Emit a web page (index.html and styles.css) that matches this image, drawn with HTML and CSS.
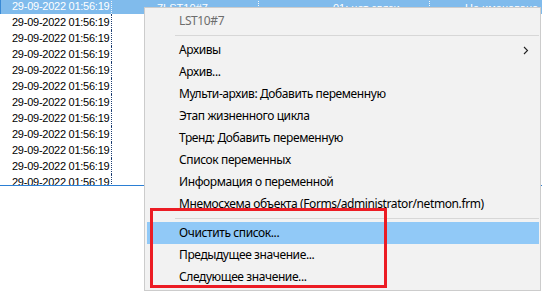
FILE: index.html
```
<!DOCTYPE html>
<html>
<head>
<meta charset="utf-8">
<link rel="stylesheet" href="styles.css">
</head>
<body>
<div class="grid">
  <div class="rows">
    <div class="row sel">
      <div class="c c1">29-09-2022 01:56:19</div>
      <div class="c c2">7LST10#7</div>
      <div class="c c3">01: нет связи</div>
      <div class="c c4">Не именовано</div>
    </div>
    <div class="row"><div class="c c1">29-09-2022 01:56:19</div></div>
    <div class="row"><div class="c c1">29-09-2022 01:56:19</div></div>
    <div class="row"><div class="c c1">29-09-2022 01:56:19</div></div>
    <div class="row"><div class="c c1">29-09-2022 01:56:19</div></div>
    <div class="row"><div class="c c1">29-09-2022 01:56:19</div></div>
    <div class="row"><div class="c c1">29-09-2022 01:56:19</div></div>
    <div class="row"><div class="c c1">29-09-2022 01:56:19</div></div>
    <div class="row"><div class="c c1">29-09-2022 01:56:19</div></div>
    <div class="row"><div class="c c1">29-09-2022 01:56:19</div></div>
    <div class="row"><div class="c c1">29-09-2022 01:56:19</div></div>
    <div class="row"><div class="c c1">29-09-2022 01:56:19</div></div>
  </div>
</div>

<div class="menu">
  <div class="mi head">LST10#7</div>
  <div class="sep"></div>
  <div class="mi">Архивы<span class="chev"><svg width="6" height="9" viewBox="0 0 6 9"><path d="M1 1 L4.5 4.5 L1 8" fill="none" stroke="#222" stroke-width="1.1"/></svg></span></div>
  <div class="mi">Архив...</div>
  <div class="mi">Мульти-архив: Добавить переменную</div>
  <div class="mi">Этап жизненного цикла</div>
  <div class="mi">Тренд: Добавить переменную</div>
  <div class="mi">Список переменных</div>
  <div class="mi">Информация о переменной</div>
  <div class="mi">Мнемосхема объекта (Forms/administrator/netmon.frm)</div>
  <div class="sep"></div>
  <div class="mi hot">Очистить список...</div>
  <div class="mi">Предыдущее значение...</div>
  <div class="mi">Следующее значение...</div>
</div>

<div class="mark"></div>
</body>
</html>
```

FILE: styles.css
```
html, body {
  margin: 0;
  padding: 0;
  background: #fff;
  width: 542px;
  height: 291px;
  overflow: hidden;
  position: relative;
}

.grid {
  height: 185px;
  border-bottom: 1px solid #2b7fd4;
  overflow: hidden;
}

.rows {
  margin-top: -2px;
}

.row {
  display: flex;
  height: 16px;
  font-family: "Liberation Sans", Arial, sans-serif;
  font-size: 11px;
  line-height: 16px;
  color: #000;
}

.c {
  white-space: nowrap;
  overflow: hidden;
  box-sizing: border-box;
}

.c1 {
  width: 112px;
  padding-left: 12px;
  border-right: 1px dotted #1d3f73;
  letter-spacing: -0.25px;
}

.c2 {
  width: 147px;
  padding-left: 45px;
  border-right: 1px dotted #1d3f73;
}

.c3 {
  width: 171px;
  padding-left: 74px;
  border-right: 1px dotted #1d3f73;
}

.c4 {
  flex: 1;
  padding-left: 35px;
}

.row.sel {
  background: #80bbec;
  color: #fff;
  box-shadow: inset 1px 0 0 #3a8ad6;
}

.row.sel .c {
  border-right-color: #f4f8fc;
}

.row.sel .c2,
.row.sel .c3,
.row.sel .c4 {
  padding-top: 2px;
}

.menu {
  position: absolute;
  left: 144px;
  top: 7px;
  width: 397px;
  height: 284px;
  box-sizing: border-box;
  background: #f2f2f2;
  border: 1px solid #cccccc;
  padding: 2px 1px 2px 2px;
  font-family: "Noto Sans", "Open Sans", sans-serif;
  font-size: 12px;
  letter-spacing: -0.4px;
  color: #000;
}

.mi {
  position: relative;
  height: 22px;
  line-height: 22px;
  padding-left: 32px;
  white-space: nowrap;
}

.mi.head {
  color: #6d6d6d;
}

.mi.hot {
  background: #91c9f7;
}

.chev {
  position: absolute;
  right: 10px;
  top: 7px;
  line-height: 0;
}

.sep {
  height: 7px;
  margin-left: 28px;
  position: relative;
}

.sep::after {
  content: "";
  position: absolute;
  left: 0;
  right: 0;
  top: 3px;
  height: 1px;
  background: #d7d7d7;
}

.mark {
  position: absolute;
  left: 150px;
  top: 208px;
  width: 237px;
  height: 80px;
  box-sizing: border-box;
  border: 3px solid #ec1c24;
}
```
